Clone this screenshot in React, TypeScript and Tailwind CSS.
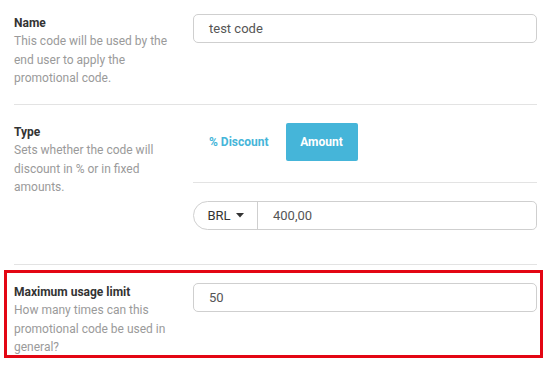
import React from "react";

const font = { fontFamily: "Roboto, 'Liberation Sans', sans-serif" };

function Label({ title, desc }: { title: string; desc: string }) {
  return (
    <div className="w-[170px] shrink-0">
      <div className="text-[12px] font-bold leading-[18px] text-[#333]">{title}</div>
      <div className="text-[12px] leading-[18.5px] text-[#9a9a9a]">{desc}</div>
    </div>
  );
}

export default function App() {
  return (
    <div className="w-[548px] h-[371px] bg-white overflow-hidden" style={font}>
      <div className="px-[14px]">
        {/* Row 1 */}
        <div className="flex pt-[14px] h-[105px] border-b border-[#e3e3e3] w-[523px]">
          <Label
            title="Name"
            desc="This code will be used by the end user to apply the promotional code."
          />
          <div className="ml-[9px] flex-1">
            <div className="h-[29px] border border-[#cfcfcf] rounded-[5px] flex items-center pl-[15px] text-[13px] text-[#555]">
              test code
            </div>
          </div>
        </div>
        {/* Row 2 */}
        <div className="flex pt-[18px] border-b border-[#e3e3e3] w-[523px] h-[160px]">
          <Label
            title="Type"
            desc="Sets whether the code will discount in % or in fixed amounts."
          />
          <div className="ml-[9px] flex-1 flex flex-col">
            <div className="flex pb-[21px] border-b border-[#e3e3e3]">
              <div className="h-[38px] px-[16px] flex items-center text-[12px] font-bold text-[#45b5d9]">
                % Discount
              </div>
              <div className="h-[38px] w-[72px] ml-[1px] flex items-center justify-center bg-[#45b5d9] rounded-[2px] text-[12px] font-bold text-white">
                Amount
              </div>
            </div>
            <div className="mt-[18px] h-[29px] flex border border-[#cfcfcf] rounded-l-[15px] rounded-r-[5px]">
              <div className="w-[64px] border-r border-[#cfcfcf] flex items-center justify-center gap-[5px] text-[13px] text-[#333]">
                <span>BRL</span>
                <svg width="8" height="5" viewBox="0 0 8 5">
                  <path d="M0 0 L8 0 L4 4.5 Z" fill="#333" />
                </svg>
              </div>
              <div className="flex items-center pl-[15px] text-[13px] text-[#555]">400,00</div>
            </div>
          </div>
        </div>
        {/* Row 3 */}
        <div className="mt-[5px] -ml-[10px] w-[539px] h-[88px] border-[3px] border-[#e30613] flex pt-[10px] pl-[7px] pr-[3px]">
          <Label
            title="Maximum usage limit"
            desc="How many times can this promotional code be used in general?"
          />
          <div className="ml-[9px] flex-1">
            <div className="h-[29px] border border-[#cfcfcf] rounded-[5px] flex items-center pl-[15px] text-[13px] text-[#555]">
              50
            </div>
          </div>
        </div>
      </div>
    </div>
  );
}
